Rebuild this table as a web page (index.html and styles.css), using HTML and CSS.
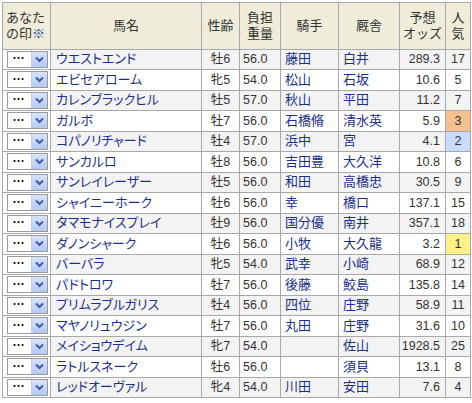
FILE: index.html
```html
<!DOCTYPE html>
<html lang="ja">
<head>
<meta charset="utf-8">
<link rel="stylesheet" href="styles.css">
</head>
<body>
<div class="wrap">
<table class="odds">
  <colgroup>
    <col class="c-mark"><col class="c-name"><col class="c-sex"><col class="c-wt"><col class="c-jk"><col class="c-tr"><col class="c-odds"><col class="c-pop">
  </colgroup>
  <thead>
    <tr>
      <th class="h-mark">あなた<br>の印<span class="kome">※</span></th>
      <th>馬名</th>
      <th>性齢</th>
      <th>負担<br>重量</th>
      <th>騎手</th>
      <th>厩舎</th>
      <th>予想<br>オッズ</th>
      <th>人<br>気</th>
    </tr>
  </thead>
  <tbody id="rows"></tbody>
</table>
</div>
<script src="app.js"></script>
</body>
</html>
```
FILE: app.js
```js
const data = [
  ["ウエストエンド","牡6","56.0","藤田","白井","289.3","17",""],
  ["エビセアローム","牝5","54.0","松山","石坂","10.6","5",""],
  ["カレンブラックヒル","牡5","57.0","秋山","平田","11.2","7",""],
  ["ガルボ","牡7","56.0","石橋脩","清水英","5.9","3","p3"],
  ["コパノリチャード","牡4","57.0","浜中","宮","4.1","2","p2"],
  ["サンカルロ","牡8","56.0","吉田豊","大久洋","10.8","6",""],
  ["サンレイレーザー","牡5","56.0","和田","高橋忠","30.5","9",""],
  ["シャイニーホーク","牡6","56.0","幸","橋口","137.1","15",""],
  ["タマモナイスプレイ","牡9","56.0","国分優","南井","357.1","18",""],
  ["ダノンシャーク","牡6","56.0","小牧","大久龍","3.2","1","p1"],
  ["バーバラ","牝5","54.0","武幸","小崎","68.9","12",""],
  ["パドトロワ","牡7","56.0","後藤","鮫島","135.8","14",""],
  ["プリムラブルガリス","牡4","56.0","四位","庄野","58.9","11",""],
  ["マヤノリュウジン","牡7","56.0","丸田","庄野","31.6","10",""],
  ["メイショウデイム","牝7","54.0","","佐山","1928.5","25",""],
  ["ラトルスネーク","牡6","56.0","","須貝","13.1","8",""],
  ["レッドオーヴァル","牝4","54.0","川田","安田","7.6","4",""]
];
const sel = '<div class="sel"><span class="dots">･･･</span><span class="btn"><svg width="9" height="7" viewBox="0 0 9 7"><path d="M1 1.5 L4.5 5 L8 1.5" fill="none" stroke="#3a5cae" stroke-width="2"/></svg></span></div>';
const tb = document.getElementById("rows");
tb.innerHTML = data.map(r =>
  `<tr><td class="mark">${sel}</td><td class="name">${r[0]}</td><td class="sex">${r[1]}</td><td class="wt">${r[2]}</td><td class="jk">${r[3]}</td><td class="tr">${r[4]}</td><td class="od">${r[5]}</td><td class="pop ${r[7]}">${r[6]}</td></tr>`
).join("");
```
FILE: styles.css
```css
html, body { margin: 0; padding: 0; background: #fff; }
body { font-family: "Liberation Sans", "Noto Sans CJK JP", sans-serif; font-size: 13px; color: #333; }
.wrap { padding: 2px 0 0 2px; }
.odds { border-collapse: collapse; table-layout: fixed; width: 468px; }
.c-mark { width: 48px; }
.c-name { width: 151px; }
.c-sex { width: 38px; }
.c-wt { width: 41px; }
.c-jk { width: 58px; }
.c-tr { width: 61px; }
.c-odds { width: 46px; }
.c-pop { width: 25px; }
.odds th, .odds td { border: 1px solid #a8a8a8; padding: 0; }
.odds th { background: #efedd9; font-weight: normal; height: 45.5px; line-height: 16px; text-align: center; color: #333; font-size: 13px; }
.odds th.h-mark { text-align: left; padding-left: 3px; }
.kome { color: #1f4fb0; }
.odds td { height: 19.5px; line-height: 16px; font-size: 12.5px; white-space: nowrap; }
.odds tbody tr:nth-child(odd) td { background: #f3f3f3; }
.odds tbody tr td.mark { background: #fff; padding: 0 2px 0 4px; }
.odds td.name { padding-left: 5px; color: #1a2f8c; font-size: 13px; font-feature-settings: "palt"; }
.odds td.sex { text-align: center; }
.odds td.wt { padding-left: 3px; }
.odds td.jk, .odds td.tr { padding-left: 4px; color: #1a2f8c; font-size: 13px; }
.odds td.od { text-align: right; padding-right: 5px; }
.odds td.pop { text-align: center; }
.odds tbody tr td.p1 { background: #fff088; }
.odds tbody tr td.p2 { background: #c9dbff; }
.odds tbody tr td.p3 { background: #f3c28f; }
.sel { display: flex; align-items: center; justify-content: space-between; width: 41px; height: 17px; border: 1px solid #9a9a9a; background: #fff; box-sizing: border-box; }
.dots { font-size: 10px; font-weight: bold; color: #000; padding-left: 4px; letter-spacing: -1px; line-height: 14px; }
.btn { width: 15px; height: 15px; background: linear-gradient(#d8e3fb, #b6c9f1); border-left: 1px solid #c0cdea; display: flex; align-items: center; justify-content: center; }
```
